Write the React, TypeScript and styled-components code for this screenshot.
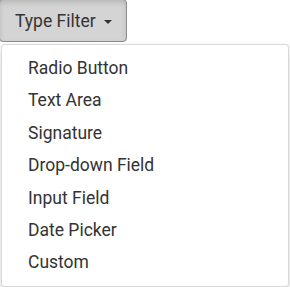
import React from "react";
import styled, { createGlobalStyle } from "styled-components";

const Global = createGlobalStyle`
  html, body { margin: 0; padding: 0; background: #ffffff; }
  body { font-family: Roboto, "Liberation Sans", sans-serif; color: #333333; overflow: hidden; }
`;

const Dropdown = styled.div`
  display: flex;
  flex-direction: column;
  align-items: flex-start;
  margin-top: -1px;
`;

const ToggleButton = styled.button`
  display: flex;
  align-items: center;
  gap: 8px;
  height: 43px;
  margin-left: -1px;
  padding: 1px 14px 0 15px;
  font-family: Roboto, "Liberation Sans", sans-serif;
  font-size: 17.5px;
  color: #333333;
  background: #d4d4d4;
  border: 1px solid #8c8c8c;
  border-radius: 4px;
  box-shadow: inset 0 3px 5px rgba(0, 0, 0, 0.125);
  cursor: pointer;
`;

const Caret = styled.span`
  width: 0;
  height: 0;
  margin-top: 2px;
  border-top: 4px solid #333333;
  border-left: 4px solid transparent;
  border-right: 4px solid transparent;
`;

const Menu = styled.ul`
  list-style: none;
  box-sizing: border-box;
  width: 288px;
  margin: 2px 0 0 1px;
  padding: 7px 0;
  background: #ffffff;
  border: 1px solid rgba(0, 0, 0, 0.15);
  border-radius: 4px;
  box-shadow: 0 6px 12px rgba(0, 0, 0, 0.175);
`;

const Item = styled.li`
  height: 32.4px;
  line-height: 32.4px;
  padding: 0 26px;
  font-size: 17.5px;
  color: #333333;
  white-space: nowrap;
`;

const items = [
  "Radio Button",
  "Text Area",
  "Signature",
  "Drop-down Field",
  "Input Field",
  "Date Picker",
  "Custom",
];

export default function App() {
  return (
    <>
      <Global />
      <Dropdown>
        <ToggleButton>
          Type Filter
          <Caret />
        </ToggleButton>
        <Menu>
          {items.map((t) => (
            <Item key={t}>{t}</Item>
          ))}
        </Menu>
      </Dropdown>
    </>
  );
}
